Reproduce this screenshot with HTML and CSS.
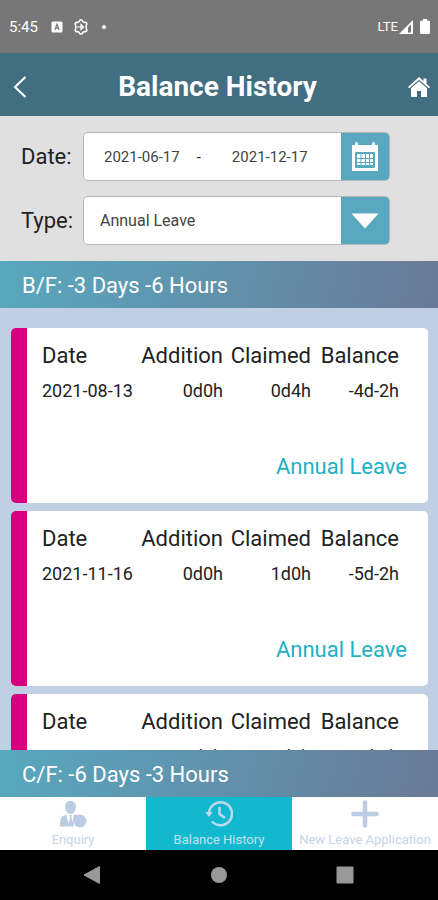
FILE: index.html
```html
<!DOCTYPE html>
<html lang="en">

<head>
  <meta charset="utf-8">
  <meta name="viewport" content="width=device-width, initial-scale=1">
  <title>Balance History</title>
  <link rel="stylesheet" href="styles.css">
</head>

<body>
  <div class="status">
    <span>5:45</span>
    <svg class="status-app" width="12" height="12" viewBox="0 0 12 12">
      <rect x="0.5" y="0.5" width="11" height="11" rx="1.5" fill="#fff" />
      <path d="M3.8 9L6 3.2L8.2 9M4.6 7.2H7.4" fill="none" stroke="#777" stroke-width="1.2" />
    </svg>
    <svg class="status-gear" width="16" height="16" viewBox="0 0 16 16">
      <path d="M6.3 2.5L7 1H9L9.7 2.5L11.3 3.4L13 3.3L14 5L13.2 6.5V9.5L14 11L13 12.7L11.3 12.6L9.7 13.5L9 15H7L6.3 13.5L4.7 12.6L3 12.7L2 11L2.8 9.5V6.5L2 5L3 3.3L4.7 3.4Z" fill="none" stroke="#fff" stroke-width="1.5" stroke-linejoin="round" />
      <path d="M4 8H8M8 5.5L10.5 8L8 10.5Z" fill="#fff" stroke="#fff" stroke-width="1.2" />
    </svg>
    <span class="status-dot"></span>
    <span class="status-net">LTE</span>
    <svg width="14" height="14" viewBox="0 0 14 14">
      <path d="M0 14L14 0V14Z" fill="#fff" />
      <path d="M9 7.5V12.5H12V4.5Z" fill="#777" />
    </svg>
    <svg class="status-battery" width="10" height="15" viewBox="0 0 10 15">
      <path d="M3 0H7V1.5H8.5Q10 1.5 10 3V13.5Q10 15 8.5 15H1.5Q0 15 0 13.5V3Q0 1.5 1.5 1.5H3Z" fill="#fff" />
    </svg>
  </div>

  <header class="header">
    <button class="icon-btn" type="button" aria-label="Back">
      <svg width="14" height="22" viewBox="0 0 14 22">
        <path d="M12.5 1L2 11L12.5 21" fill="none" stroke="#fff" stroke-width="2" />
      </svg>
    </button>
    <h1>Balance History</h1>
    <button class="icon-btn" type="button" aria-label="Home">
      <svg width="22" height="20" viewBox="0 0 22 20">
        <path d="M11 0L15.5 4V1.5H18.5V6.8L22 10L20.8 11.3L11 2.7L1.2 11.3L0 10Z" fill="#fff" />
        <path d="M11 4.2L19 11.2V20H13V14H9V20H3V11.2Z" fill="#fff" />
      </svg>
    </button>
  </header>

  <form class="filters">
    <div class="filter">
      <label for="from">Date:</label>
      <div class="field">
        <input id="from" class="date-from" type="text" value="2021-06-17">
        <span class="dash">-</span>
        <input id="to" type="text" value="2021-12-17" aria-label="End date">
        <button class="field-btn" type="button" aria-label="Pick dates">
          <svg width="28" height="30" viewBox="0 0 28 30">
            <path d="M1 3H4V2Q4 0 5.5 0T7 2V3H21V2Q21 0 22.5 0T24 2V3H27V29H1Z" fill="#fff" />
            <rect x="4" y="10" width="20" height="16" rx="1" fill="#5aa8c0" />
            <path d="M6 12H9.5V16H6ZM10.5 12H14V16H10.5ZM15 12H18V16H15ZM19 12H22V16H19ZM6 17H9.5V20H6ZM10.5 17H14V20H10.5ZM15 17H18V20H15ZM19 17H22V20H19ZM6 21H9.5V23H6ZM10.5 21H14V23H10.5ZM15 21H18V23H15ZM19 21H22V23H19Z" fill="#fff" />
          </svg>
        </button>
      </div>
    </div>
    <div class="filter">
      <label for="type">Type:</label>
      <div class="field">
        <select id="type">
          <option>Annual Leave</option>
        </select>
        <span class="field-btn">
          <svg width="28" height="16" viewBox="0 0 28 16">
            <path d="M0.5 0.5H27.5L14 15.5Z" fill="#fff" />
          </svg>
        </span>
      </div>
    </div>
  </form>

  <div class="total">B/F: -3 Days -6 Hours</div>

  <main class="list">
    <section class="card">
      <table>
        <tr>
          <th>Date</th>
          <th>Addition</th>
          <th>Claimed</th>
          <th>Balance</th>
        </tr>
        <tr>
          <td>2021-08-13</td>
          <td>0d0h</td>
          <td>0d4h</td>
          <td>-4d-2h</td>
        </tr>
      </table>
      <p class="leave">Annual Leave</p>
    </section>
    <section class="card">
      <table>
        <tr>
          <th>Date</th>
          <th>Addition</th>
          <th>Claimed</th>
          <th>Balance</th>
        </tr>
        <tr>
          <td>2021-11-16</td>
          <td>0d0h</td>
          <td>1d0h</td>
          <td>-5d-2h</td>
        </tr>
      </table>
      <p class="leave">Annual Leave</p>
    </section>
    <section class="card">
      <table>
        <tr>
          <th>Date</th>
          <th>Addition</th>
          <th>Claimed</th>
          <th>Balance</th>
        </tr>
        <tr>
          <td></td>
          <td>0d0h</td>
          <td>1d1h</td>
          <td>-6d-3h</td>
        </tr>
      </table>
    </section>
  </main>

  <div class="total">C/F: -6 Days -3 Hours</div>

  <nav class="tabs">
    <a class="tab" href="#enquiry">
      <svg width="28" height="28" viewBox="0 0 28 28">
        <path d="M11.5 1C15 1 17 3.5 17 7C17 10.5 14.5 14 11.5 14S6 10.5 6 7C6 3.5 8 1 11.5 1Z" fill="#bccce2" />
        <path d="M7 14.5L10 24L11 17L10 15H13L12.3 17L13.5 22L15 14.5C17 15 18 15 18.5 15.5Q13 18.5 15 26.5H1C1 19 2 16 7 14.5Z" fill="#bccce2" />
        <circle cx="21" cy="21" r="6.5" fill="#bccce2" />
      </svg>
      Enquiry
    </a>
    <a class="tab active" href="#history">
      <svg width="28" height="28" viewBox="0 0 28 28">
        <path d="M4 13A11.5 11.5 0 1 1 7 21.5" fill="none" stroke="#c3d8ec" stroke-width="2.5" />
        <path d="M0 12H7.5L4 17Z" fill="#c3d8ec" />
        <path d="M14.5 7V14L20 18" fill="none" stroke="#c3d8ec" stroke-width="2.5" />
      </svg>
      Balance History
    </a>
    <a class="tab" href="#new">
      <svg width="28" height="28" viewBox="0 0 28 28">
        <path d="M14 2.500V25.500M2.500 14H25.500" fill="none" stroke="#bccce2" stroke-width="4.5" stroke-linecap="round" />
      </svg>
      New Leave Application
    </a>
  </nav>

  <div class="sysbar">
    <button type="button" aria-label="System back">
      <svg width="18" height="20" viewBox="0 0 18 20">
        <path d="M1 10L16.5 1.5V18.5Z" fill="#999" stroke="#999" stroke-linejoin="round" />
      </svg>
    </button>
    <button type="button" aria-label="System home">
      <svg width="18" height="18" viewBox="0 0 18 18">
        <circle cx="9" cy="9" r="8" fill="#999" />
      </svg>
    </button>
    <button type="button" aria-label="Recent apps">
      <svg width="18" height="18" viewBox="0 0 18 18">
        <rect x="0.5" y="0.5" width="17" height="17" rx="1" fill="#999" />
      </svg>
    </button>
  </div>
</body>

</html>
```
FILE: styles.css
```css
* {
  box-sizing: border-box;
}

body {
  display: flex;
  flex-direction: column;
  height: 100vh;
  margin: 0;
  font-family: Roboto, "Liberation Sans", sans-serif;
  color: #222;
}

svg {
  display: block;
  flex: none;
}

button {
  display: flex;
  align-items: center;
  justify-content: center;
  padding: 0;
  border: 0;
  background: none;
}

.status {
  display: flex;
  flex: none;
  align-items: center;
  height: 53px;
  padding: 0 8px 0 9px;
  background: #777;
  color: #fff;
  font-size: 15px;
}

.status-app {
  margin-left: 13px;
}

.status-gear {
  margin-left: 10px;
}

.status-dot {
  width: 4px;
  height: 4px;
  margin-left: 13px;
  border-radius: 50%;
  background: #fff;
}

.status-net {
  margin: 0 1px 0 auto;
  font-size: 13px;
}

.status-battery {
  margin-left: 7px;
}

.header {
  display: flex;
  flex: none;
  align-items: center;
  justify-content: space-between;
  height: 63px;
  padding: 4px 8px 0 13px;
  background: #426e82;
  color: #fff;
}

.header h1 {
  margin: 0;
  font-size: 28px;
  font-weight: 700;
}

.icon-btn {
  height: 42px;
}

.filters {
  display: flex;
  flex: none;
  flex-direction: column;
  gap: 15px;
  height: 145px;
  padding: 16px 48px 0 21px;
  background: #e0e0e0;
}

.filter {
  display: flex;
  align-items: center;
  font-size: 22px;
}

.filter label {
  width: 62px;
}

.field {
  display: flex;
  flex: 1;
  height: 49px;
  border: 1px solid #b5b5b5;
  border-radius: 5px;
  background: #fff;
  overflow: hidden;
}

.field input,
.field select {
  flex: 1;
  min-width: 0;
  border: 0;
  background: none;
  font-family: inherit;
  font-size: 15px;
  color: #444;
}

.field input {
  padding: 0 0 0 20px;
}

.field .date-from {
  flex: 0 0 37%;
}

.field select {
  padding: 0 0 0 16px;
  appearance: none;
  font-size: 16px;
}

.field .dash {
  align-self: center;
  width: 15px;
  font-size: 15px;
}

.field-btn {
  display: flex;
  flex: none;
  align-items: center;
  justify-content: center;
  width: 48px;
  background: #5aa8c0;
}

.total {
  flex: none;
  height: 47px;
  padding-left: 22px;
  background: linear-gradient(100deg, #58a8be, #6a7a98);
  color: #fff;
  font-size: 22px;
  line-height: 49px;
}

.list {
  flex: 1;
  min-height: 0;
  padding: 20px 10px 0 11px;
  background: #c0cfe4;
  overflow: hidden;
}

.card {
  height: 175px;
  margin-bottom: 8px;
  padding: 11px 29px 0 15px;
  border-left: 16px solid #d6007f;
  border-radius: 5px;
  background: #fff;
}

.card table {
  width: 100%;
  table-layout: fixed;
  border-collapse: collapse;
}

.card th,
.card td {
  width: 88px;
  padding: 0;
  text-align: right;
  white-space: nowrap;
}

.card th {
  height: 32px;
  font-size: 22px;
  font-weight: 400;
}

.card td {
  height: 38px;
  font-size: 18px;
}

.card th:first-child,
.card td:first-child {
  width: auto;
  text-align: left;
}

.leave {
  margin: 44px -8px 0 0;
  color: #1fb0c4;
  font-size: 22px;
  line-height: 28px;
  text-align: right;
}

.tabs {
  display: flex;
  flex: none;
  height: 53px;
  background: #fff;
}

.tab {
  display: flex;
  flex: 1 0 0;
  flex-direction: column;
  align-items: center;
  gap: 5px;
  padding-top: 3px;
  color: #c9d3e6;
  font-size: 13px;
  line-height: 14px;
  text-decoration: none;
  white-space: nowrap;
}

.tab.active {
  background: #12b8cd;
  color: #c3e2f0;
}

.sysbar {
  display: flex;
  flex: none;
  align-items: center;
  justify-content: space-between;
  height: 50px;
  padding: 0 84px 0 83px;
  background: #000;
}
```
